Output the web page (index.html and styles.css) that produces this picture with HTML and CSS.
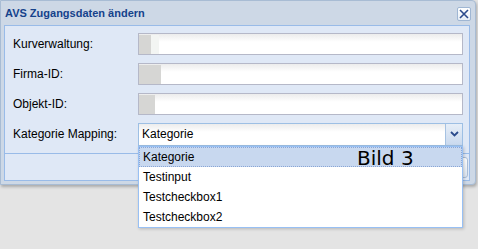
FILE: index.html
```html
<!doctype html>
<html lang="de">
<head>
<meta charset="UTF-8">
<title>AVS Zugangsdaten ändern</title>
<link rel="stylesheet" href="styles.css">
</head>
<body>
	<div class="win">
		<div class="win-head">
			<span class="win-title">AVS Zugangsdaten ändern</span>
			<span class="win-close">
				<svg width="10" height="10" viewBox="0 0 10 10"><path d="M1 1L9 9M9 1L1 9" stroke="#2a4a8c" stroke-width="1.6"/></svg>
			</span>
		</div>
		<div class="win-body">
			<div class="form">
				<div class="row">
					<label>Kurverwaltung:</label>
					<div class="field"><span class="blur" style="width:12px"></span><span class="blur light" style="width:8px"></span></div>
				</div>
				<div class="row">
					<label>Firma-ID:</label>
					<div class="field"><span class="blur" style="width:22px"></span></div>
				</div>
				<div class="row">
					<label>Objekt-ID:</label>
					<div class="field"><span class="blur" style="width:16px"></span></div>
				</div>
				<div class="row">
					<label>Kategorie Mapping:</label>
					<div class="combo">
						<div class="combo-box">
							<span class="combo-text">Kategorie</span>
							<span class="trigger">
								<svg width="9" height="6" viewBox="0 0 9 6"><path d="M1 1L4.5 4.5L8 1" fill="none" stroke="#2a4a8c" stroke-width="1.8"/></svg>
							</span>
						</div>
						<ul class="combo-list">
							<li class="sel">Kategorie</li>
							<li>Testinput</li>
							<li>Testcheckbox1</li>
							<li>Testcheckbox2</li>
						</ul>
					</div>
				</div>
			</div>
			<div class="footer">
				<button class="btn">Speichern</button>
			</div>
		</div>
	</div>
	<div class="caption">Bild 3</div>
</body>
</html>
```

FILE: styles.css
```css
*{
	box-sizing: border-box;
}
html, body{
	height: 100%;
}
body{
	margin: 0;
	min-height: 249px;
	background-color: #e4e4e4;
	font-family: "Liberation Sans", Arial, sans-serif;
	font-size: 12px;
	color: #000;
}

/* window frame */
.win{
	width: 476px;
	background-color: #cdd8e6;
	border: 1px solid #a8bcd4;
	border-radius: 0 4px 4px 0;
	padding: 0 5px 3px 3px;
	box-shadow: 1px 2px 3px rgba(0,0,0,0.25);
}
.win-head{
	height: 24px;
	display: flex;
	align-items: center;
	justify-content: space-between;
	padding-left: 1px;
}
.win-title{
	font-size: 11px;
	font-weight: bold;
	color: #15428b;
}
.win-close{
	width: 14px;
	height: 14px;
	margin-right: -1px;
	margin-top: 1px;
	display: flex;
	align-items: center;
	justify-content: center;
	background: linear-gradient(#ffffff, #e6edf6);
	border: 1px solid #9fb6d3;
	border-radius: 2px;
}

.win-body{
	border: 1px solid #99bbe8;
	background-color: #dfe8f6;
}
.form{
	padding: 7px 6px 8px 8px;
	display: flex;
	flex-direction: column;
	gap: 8px;
	border-bottom: 1px solid #99bbe8;
}
.row{
	display: flex;
	align-items: center;
	height: 22px;
}
.row label{
	width: 125px;
	flex: none;
}
.field{
	flex: 1;
	height: 22px;
	border: 1px solid #b5b8c8;
	background: linear-gradient(#ececec, #ffffff 8px);
	display: flex;
	padding-top: 1px;
}
.blur{
	height: 19px;
	background-color: #d6d6d4;
}
.blur.light{
	background-color: #f3f5f3;
}

/* combo */
.combo{
	flex: 1;
	position: relative;
}
.combo-box{
	height: 23px;
	border: 1px solid #9dbfe4;
	background: linear-gradient(#ececec, #ffffff 8px);
	display: flex;
	align-items: center;
}
.combo-text{
	flex: 1;
	padding-left: 3px;
}
.trigger{
	width: 17px;
	height: 21px;
	border-left: 1px solid #a6c2e2;
	background: linear-gradient(#e6eef8, #c9d9ee);
	display: flex;
	align-items: center;
	justify-content: center;
}
.combo-list{
	position: absolute;
	top: 100%;
	left: 0;
	right: 0;
	margin: 0;
	padding: 0;
	list-style: none;
	background-color: #fff;
	border: 1px solid #98c0f4;
	box-shadow: 1px 1px 3px rgba(0,0,0,0.2);
	z-index: 2;
}
.combo-list li{
	height: 20px;
	line-height: 18px;
	padding-left: 3px;
	border: 1px solid transparent;
}
.combo-list li.sel{
	background-color: #c8d8ef;
	border: 1px dotted #8aa6d6;
}

.footer{
	height: 26px;
	display: flex;
	align-items: center;
	justify-content: flex-end;
	padding-right: 1px;
}
.btn{
	width: 75px;
	height: 21px;
	border: 1px solid #a9bcd6;
	border-radius: 3px;
	background: linear-gradient(#ffffff, #dbe4f0);
	font-family: inherit;
	font-size: 11px;
}

.caption{
	position: absolute;
	left: 357px;
	top: 148px;
	font-family: "DejaVu Sans", sans-serif;
	font-size: 20px;
	line-height: 20px;
	z-index: 3;
}
```
